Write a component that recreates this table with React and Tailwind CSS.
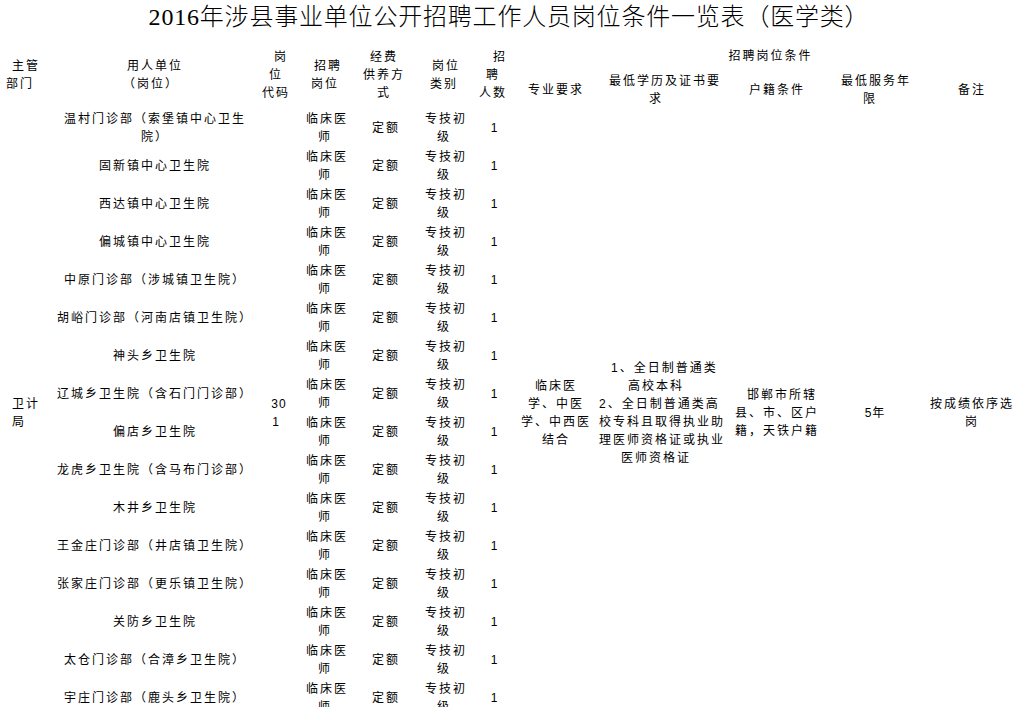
const UNITS = [
  ['温村门诊部（索堡镇中心卫生', '院）'],
  ['固新镇中心卫生院'],
  ['西达镇中心卫生院'],
  ['偏城镇中心卫生院'],
  ['中原门诊部（涉城镇卫生院）'],
  ['胡峪门诊部（河南店镇卫生院）'],
  ['神头乡卫生院'],
  ['辽城乡卫生院（含石门门诊部）'],
  ['偏店乡卫生院'],
  ['龙虎乡卫生院（含马布门诊部）'],
  ['木井乡卫生院'],
  ['王金庄门诊部（井店镇卫生院）'],
  ['张家庄门诊部（更乐镇卫生院）'],
  ['关防乡卫生院'],
  ['太仓门诊部（合漳乡卫生院）'],
  ['宇庄门诊部（鹿头乡卫生院）'],
]

function Lines({ lines }) {
  return lines.map((line, i) => <div key={i}>{line}</div>)
}

export default function App() {
  const span = UNITS.length

  return (
    <div
      className="w-[1018px] h-[707px] overflow-hidden bg-white text-black"
      style={{ fontFamily: '"Liberation Sans", "Noto Sans CJK SC", sans-serif' }}
    >
      <div
        className="h-[41px] leading-[35px] text-center text-[24px] font-light tracking-[0.8px]"
        style={{ fontFamily: '"Liberation Serif", "Noto Sans CJK SC", serif' }}
      >
        2016年涉县事业单位公开招聘工作人员岗位条件一览表（医学类）
      </div>

      <table className="table-fixed border-collapse w-[1018px] text-[12px] leading-[18px] tracking-[2px] whitespace-nowrap">
        <colgroup>
          <col className="w-[55px]" />
          <col className="w-[200px]" />
          <col className="w-[42px]" />
          <col className="w-[56px]" />
          <col className="w-[62px]" />
          <col className="w-[58px]" />
          <col className="w-[40px]" />
          <col className="w-[86px]" />
          <col className="w-[114px]" />
          <col className="w-[128px]" />
          <col className="w-[68px]" />
          <col className="w-[109px]" />
        </colgroup>
        <thead>
          <tr className="h-[30px]">
            <th rowSpan={2} className="p-0 font-normal text-left align-middle">
              <div className="pl-[12px]">主管</div>
              <div className="pl-[6px]">部门</div>
            </th>
            <th rowSpan={2} className="p-0 font-normal text-center align-middle">
              <div>用人单位</div>
              <div className="pr-[8px]">（岗位）</div>
            </th>
            <th rowSpan={2} className="p-0 font-normal text-center align-middle">
              <div className="pl-[10px]">岗</div>
              <div>位</div>
              <div>代码</div>
            </th>
            <th rowSpan={2} className="p-0 font-normal text-center align-middle">
              <div className="pl-[6px]">招聘</div>
              <div>岗位</div>
            </th>
            <th rowSpan={2} className="p-0 font-normal text-center align-middle">
              <Lines lines={['经费', '供养方', '式']} />
            </th>
            <th rowSpan={2} className="p-0 font-normal text-center align-middle">
              <div className="pl-[4px]">岗位</div>
              <div>类别</div>
            </th>
            <th rowSpan={2} className="p-0 font-normal text-center align-middle">
              <div className="pl-[14px]">招</div>
              <div>聘</div>
              <div>人数</div>
            </th>
            <th colSpan={5} className="p-0 font-normal text-center align-middle pl-[10px]">
              招聘岗位条件
            </th>
          </tr>
          <tr className="h-[38px]">
            <th className="p-0 font-normal text-center align-middle">专业要求</th>
            <th className="p-0 font-normal text-center align-middle">
              <div className="pl-[10px]">最低学历及证书要</div>
              <div>求</div>
            </th>
            <th className="p-0 font-normal text-center align-middle">户籍条件</th>
            <th className="p-0 font-normal text-center align-middle">
              <div>最低服务年</div>
              <div className="pr-[10px]">限</div>
            </th>
            <th className="p-0 font-normal text-center align-middle pl-[17px]">备注</th>
          </tr>
        </thead>
        <tbody>
          {UNITS.map((unit, index) => (
            <tr key={index} className="h-[38px]">
              {index === 0 && (
                <td rowSpan={span} className="p-0 text-left align-middle pl-[12px]">
                  <div>卫计</div>
                  <div>局</div>
                </td>
              )}
              <td className="p-0 text-center align-middle">
                <Lines lines={unit} />
              </td>
              {index === 0 && (
                <td rowSpan={span} className="p-0 text-center align-middle tracking-[1px]">
                  <div className="pl-[6px]">30</div>
                  <div>1</div>
                </td>
              )}
              <td className="p-0 text-center align-middle">
                <div className="pl-[4px]">临床医</div>
                <div>师</div>
              </td>
              <td className="p-0 text-center align-middle pl-[4px]">定额</td>
              <td className="p-0 text-center align-middle">
                <div className="pl-[4px]">专技初</div>
                <div>级</div>
              </td>
              <td className="p-0 text-center align-middle pl-[4px]">1</td>
              {index === 0 && (
                <>
                  <td rowSpan={span} className="p-0 text-center align-middle">
                    <Lines lines={['临床医', '学、中医', '学、中西医', '结合']} />
                  </td>
                  <td rowSpan={span} className="p-0 text-center align-middle">
                    <div className="pl-[12px]">1、全日制普通类</div>
                    <div>高校本科</div>
                    <div>2、全日制普通类高</div>
                    <div>校专科且取得执业助</div>
                    <div>理医师资格证或执业</div>
                    <div>医师资格证</div>
                  </td>
                  <td rowSpan={span} className="p-0 text-center align-middle">
                    <div className="pl-[10px]">邯郸市所辖</div>
                    <div>县、市、区户</div>
                    <div>籍，天铁户籍</div>
                  </td>
                  <td rowSpan={span} className="p-0 text-center align-middle tracking-[1px]">5年</td>
                  <td rowSpan={span} className="p-0 text-center align-middle pl-[17px]">
                    <div>按成绩依序选</div>
                    <div>岗</div>
                  </td>
                </>
              )}
            </tr>
          ))}
        </tbody>
      </table>
    </div>
  )
}
